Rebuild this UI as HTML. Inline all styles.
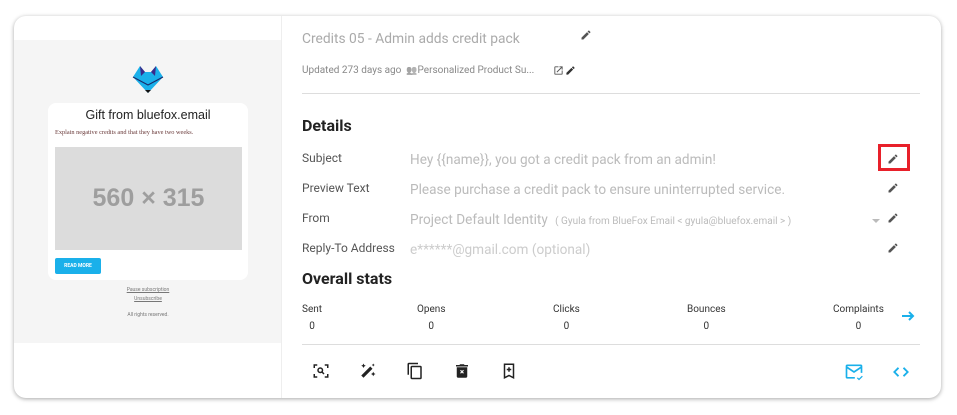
<!DOCTYPE html>
<html><head><style>
*{margin:0;padding:0;box-sizing:border-box}
body{width:957px;height:415px;background:#fff;font-family:Roboto,"Liberation Sans",sans-serif;position:relative;overflow:hidden}
.card{position:absolute;left:14px;top:16px;width:927px;height:382px;border-radius:12px;background:#fff;box-shadow:0 1px 4px rgba(0,0,0,.35);overflow:hidden}
.a{position:absolute;white-space:nowrap}
.lbl{font-size:12px;color:#555}
.val{font-size:13.6px;color:#bbb}
svg.p{position:absolute;width:12px;height:12px}
</style></head><body>
<div class="card">
 <div class="a" style="left:0;top:24px;width:268px;height:303px;background:#f5f5f5"></div>
 <div class="a" style="left:267px;top:0;width:1px;height:382px;background:#eee"></div>
 <svg class="a" style="left:117px;top:48px" width="34" height="30" viewBox="0 0 34 30"><polygon points="2,13 9,2 14,8 20,8 25,2 32,13 17,29" fill="#1ab0ea"/><polygon points="9,2 14,8 10,12" fill="#3a2a8a"/><polygon points="25,2 20,8 24,12" fill="#3a2a8a"/><polyline points="2,13 17,21 32,13" fill="none" stroke="#1a2a6a" stroke-width="1.2"/><polygon points="14,26 20,26 17,29" fill="#111"/></svg>
 <div class="a" style="left:34px;top:87px;width:200px;height:177px;background:#fff;border-radius:8px"></div>
 <div class="a" style="left:34px;top:92px;width:200px;text-align:center;font-size:12.5px;color:#222;font-family:'Liberation Sans',sans-serif">Gift from bluefox.email</div>
 <div class="a" style="left:41px;top:113px;font-size:6.3px;color:#6a3a3a;font-family:'Liberation Serif',serif">Explain negative credits and that they have two weeks.</div>
 <div class="a" style="left:41px;top:131px;width:187px;height:103px;background:#dcdcdc;color:#9e9e9e;font-size:25px;font-weight:bold;text-align:center;line-height:103px;font-family:'Liberation Sans',sans-serif">560 × 315</div>
 <div class="a" style="left:41px;top:242px;width:46px;height:16px;background:#1ab0ea;border-radius:2px;color:#fff;font-size:5px;font-weight:bold;text-align:center;line-height:16px">READ MORE</div>
 <div class="a" style="left:34px;top:270px;width:200px;text-align:center;font-size:5px;color:#777;line-height:9px;text-decoration:underline">Pause subscription<br>Unsubscribe</div>
 <div class="a" style="left:34px;top:296px;width:200px;text-align:center;font-size:5px;color:#777">All rights reserved.</div>

 <div class="a" style="left:288px;top:15px;font-size:13.8px;color:#aaa">Credits 05 - Admin adds credit pack</div>
 <svg class="p" style="left:566px;top:13px" viewBox="0 0 24 24"><path d="M3 17.25V21h3.75L17.8 9.94l-3.75-3.75zM20.7 7.04a1 1 0 000-1.41l-2.34-2.34a1 1 0 00-1.41 0l-1.83 1.83 3.75 3.75z" fill="#555"/></svg>
 <div class="a" style="left:288px;top:49px;font-size:10px;color:#888">Updated 273 days ago &nbsp;<span style="font-size:9px;filter:grayscale(1);opacity:.6">👥</span>Personalized Product Su...</div>
 <svg class="a" style="left:539px;top:49px" width="11" height="11" viewBox="0 0 24 24"><path d="M19 19H5V5h7V3H5a2 2 0 00-2 2v14a2 2 0 002 2h14a2 2 0 002-2v-7h-2zM14 3v2h3.59l-9.830 9.83 1.41 1.41L19 6.41V10h2V3z" fill="#555"/></svg>
 <svg class="p" style="left:551px;top:49px;width:11px;height:11px" viewBox="0 0 24 24"><path d="M3 17.25V21h3.75L17.8 9.94l-3.75-3.75zM20.7 7.04a1 1 0 000-1.41l-2.34-2.34a1 1 0 00-1.41 0l-1.83 1.83 3.75 3.75z" fill="#333"/></svg>
 <div class="a" style="left:288px;top:77px;width:618px;height:1px;background:#ddd"></div>
 <div class="a" style="left:288px;top:100px;font-size:16px;font-weight:bold;color:#222">Details</div>

 <div class="a lbl" style="left:288px;top:135px">Subject</div>
 <div class="a val" style="left:396px;top:136px">Hey {{name}}, you got a credit pack from an admin!</div>
 <div class="a" style="left:864px;top:128px;width:32px;height:27px;border:3px solid #e8202a"></div>
 <div class="a lbl" style="left:288px;top:165px">Preview Text</div>
 <div class="a val" style="left:396px;top:166px">Please purchase a credit pack to ensure uninterrupted service.</div>
 <div class="a lbl" style="left:288px;top:195px">From</div>
 <div class="a val" style="left:396px;top:196px">Project Default Identity <span style="font-size:10px;margin-left:4px">( Gyula from BlueFox Email &lt; gyula@bluefox.email &gt; )</span></div>
 <div class="a" style="left:858px;top:203px;border:4px solid transparent;border-top-color:#bbb;border-bottom:0"></div>
 <div class="a lbl" style="left:288px;top:225px">Reply-To Address</div>
 <div class="a val" style="left:396px;top:226px;color:#ccc">e******@gmail.com (optional)</div>
 <svg class="p" style="left:873px;top:137px" viewBox="0 0 24 24"><path d="M3 17.25V21h3.75L17.8 9.94l-3.75-3.75zM20.7 7.04a1 1 0 000-1.41l-2.34-2.34a1 1 0 00-1.41 0l-1.83 1.83 3.75 3.75z" fill="#555"/></svg>
 <svg class="p" style="left:873px;top:166px" viewBox="0 0 24 24"><path d="M3 17.25V21h3.75L17.8 9.94l-3.75-3.75zM20.7 7.04a1 1 0 000-1.41l-2.34-2.34a1 1 0 00-1.41 0l-1.83 1.83 3.75 3.75z" fill="#555"/></svg>
 <svg class="p" style="left:873px;top:196px" viewBox="0 0 24 24"><path d="M3 17.25V21h3.75L17.8 9.94l-3.75-3.75zM20.7 7.04a1 1 0 000-1.41l-2.34-2.34a1 1 0 00-1.41 0l-1.83 1.83 3.75 3.75z" fill="#555"/></svg>
 <svg class="p" style="left:873px;top:226px" viewBox="0 0 24 24"><path d="M3 17.25V21h3.75L17.8 9.94l-3.75-3.75zM20.7 7.04a1 1 0 000-1.41l-2.34-2.34a1 1 0 00-1.41 0l-1.83 1.83 3.75 3.75z" fill="#555"/></svg>
 <div class="a" style="left:288px;top:253px;font-size:16px;font-weight:bold;color:#222">Overall stats</div>

 <div class="a" style="left:288px;top:285px;font-size:10px;color:#333;line-height:17px;text-align:center">Sent<br>0</div>
 <div class="a" style="left:403px;top:285px;font-size:10px;color:#333;line-height:17px;text-align:center">Opens<br>0</div>
 <div class="a" style="left:539px;top:285px;font-size:10px;color:#333;line-height:17px;text-align:center">Clicks<br>0</div>
 <div class="a" style="left:673px;top:285px;font-size:10px;color:#333;line-height:17px;text-align:center">Bounces<br>0</div>
 <div class="a" style="left:819px;top:285px;font-size:10px;color:#333;line-height:17px;text-align:center">Complaints<br>0</div>
 <svg class="a" style="left:888px;top:295px" width="13" height="10" viewBox="0 0 13 10"><path d="M0 5h11M7 1l4 4-4 4" fill="none" stroke="#1ab0ea" stroke-width="2"/></svg>
 <div class="a" style="left:288px;top:328px;width:618px;height:1px;background:#ddd"></div>

 <svg class="a" style="left:298px;top:346px" width="18" height="18" viewBox="0 0 24 24"><path d="M3 8V4h4M17 4h4v4M21 16v4h-4M7 20H3v-4" fill="none" stroke="#222" stroke-width="2"/><circle cx="11" cy="11" r="3" fill="none" stroke="#222" stroke-width="2"/><path d="M13 13l3 3" stroke="#222" stroke-width="2"/></svg>
 <svg class="a" style="left:345px;top:346px" width="18" height="18" viewBox="0 0 24 24"><path d="M3 18L15 6l3 3L6 21z" fill="#222"/><path d="M6 2l1 2 2 1-2 1-1 2-1-2-2-1 2-1zM19 13l1 2 2 1-2 1-1 2-1-2-2-1 2-1zM19 2l.7 1.3L21 4l-1.3.7L19 6l-.7-1.3L17 4l1.3-.7z" fill="#222"/></svg>
 <svg class="a" style="left:392px;top:346px" width="18" height="18" viewBox="0 0 24 24"><path d="M16 1H4a2 2 0 00-2 2v14h2V3h12zm3 4H8a2 2 0 00-2 2v14a2 2 0 002 2h11a2 2 0 002-2V7a2 2 0 00-2-2zm0 16H8V7h11z" fill="#222"/></svg>
 <svg class="a" style="left:439px;top:346px" width="18" height="18" viewBox="0 0 24 24"><path d="M15 4V3H9v1H4v2h16V4zM5 7v12a2 2 0 002 2h10a2 2 0 002-2V7z" fill="#222"/><path d="M10 11l4 4M14 11l-4 4" stroke="#fff" stroke-width="1.5"/></svg>
 <svg class="a" style="left:486px;top:346px" width="18" height="18" viewBox="0 0 24 24"><path d="M6 3h12v18l-6-3-6 3z" fill="none" stroke="#222" stroke-width="2"/><path d="M12 7v6M9 10h6" stroke="#222" stroke-width="2"/></svg>
 <svg class="a" style="left:830px;top:346px" width="20" height="20" viewBox="0 0 24 24"><path d="M13 19H4a1 1 0 01-1-1V5a1 1 0 011-1h16a1 1 0 011 1v8" fill="none" stroke="#1ab0ea" stroke-width="2"/><path d="M3 6l9 6 9-6" fill="none" stroke="#1ab0ea" stroke-width="2"/><path d="M16 19l2 2 4-4" fill="none" stroke="#1ab0ea" stroke-width="1.5"/></svg>
 <svg class="a" style="left:877px;top:346px" width="20" height="20" viewBox="0 0 24 24"><path d="M9 7l-5 5 5 5M15 7l5 5-5 5" fill="none" stroke="#1ab0ea" stroke-width="2.2"/></svg>
</div>
</body></html>
